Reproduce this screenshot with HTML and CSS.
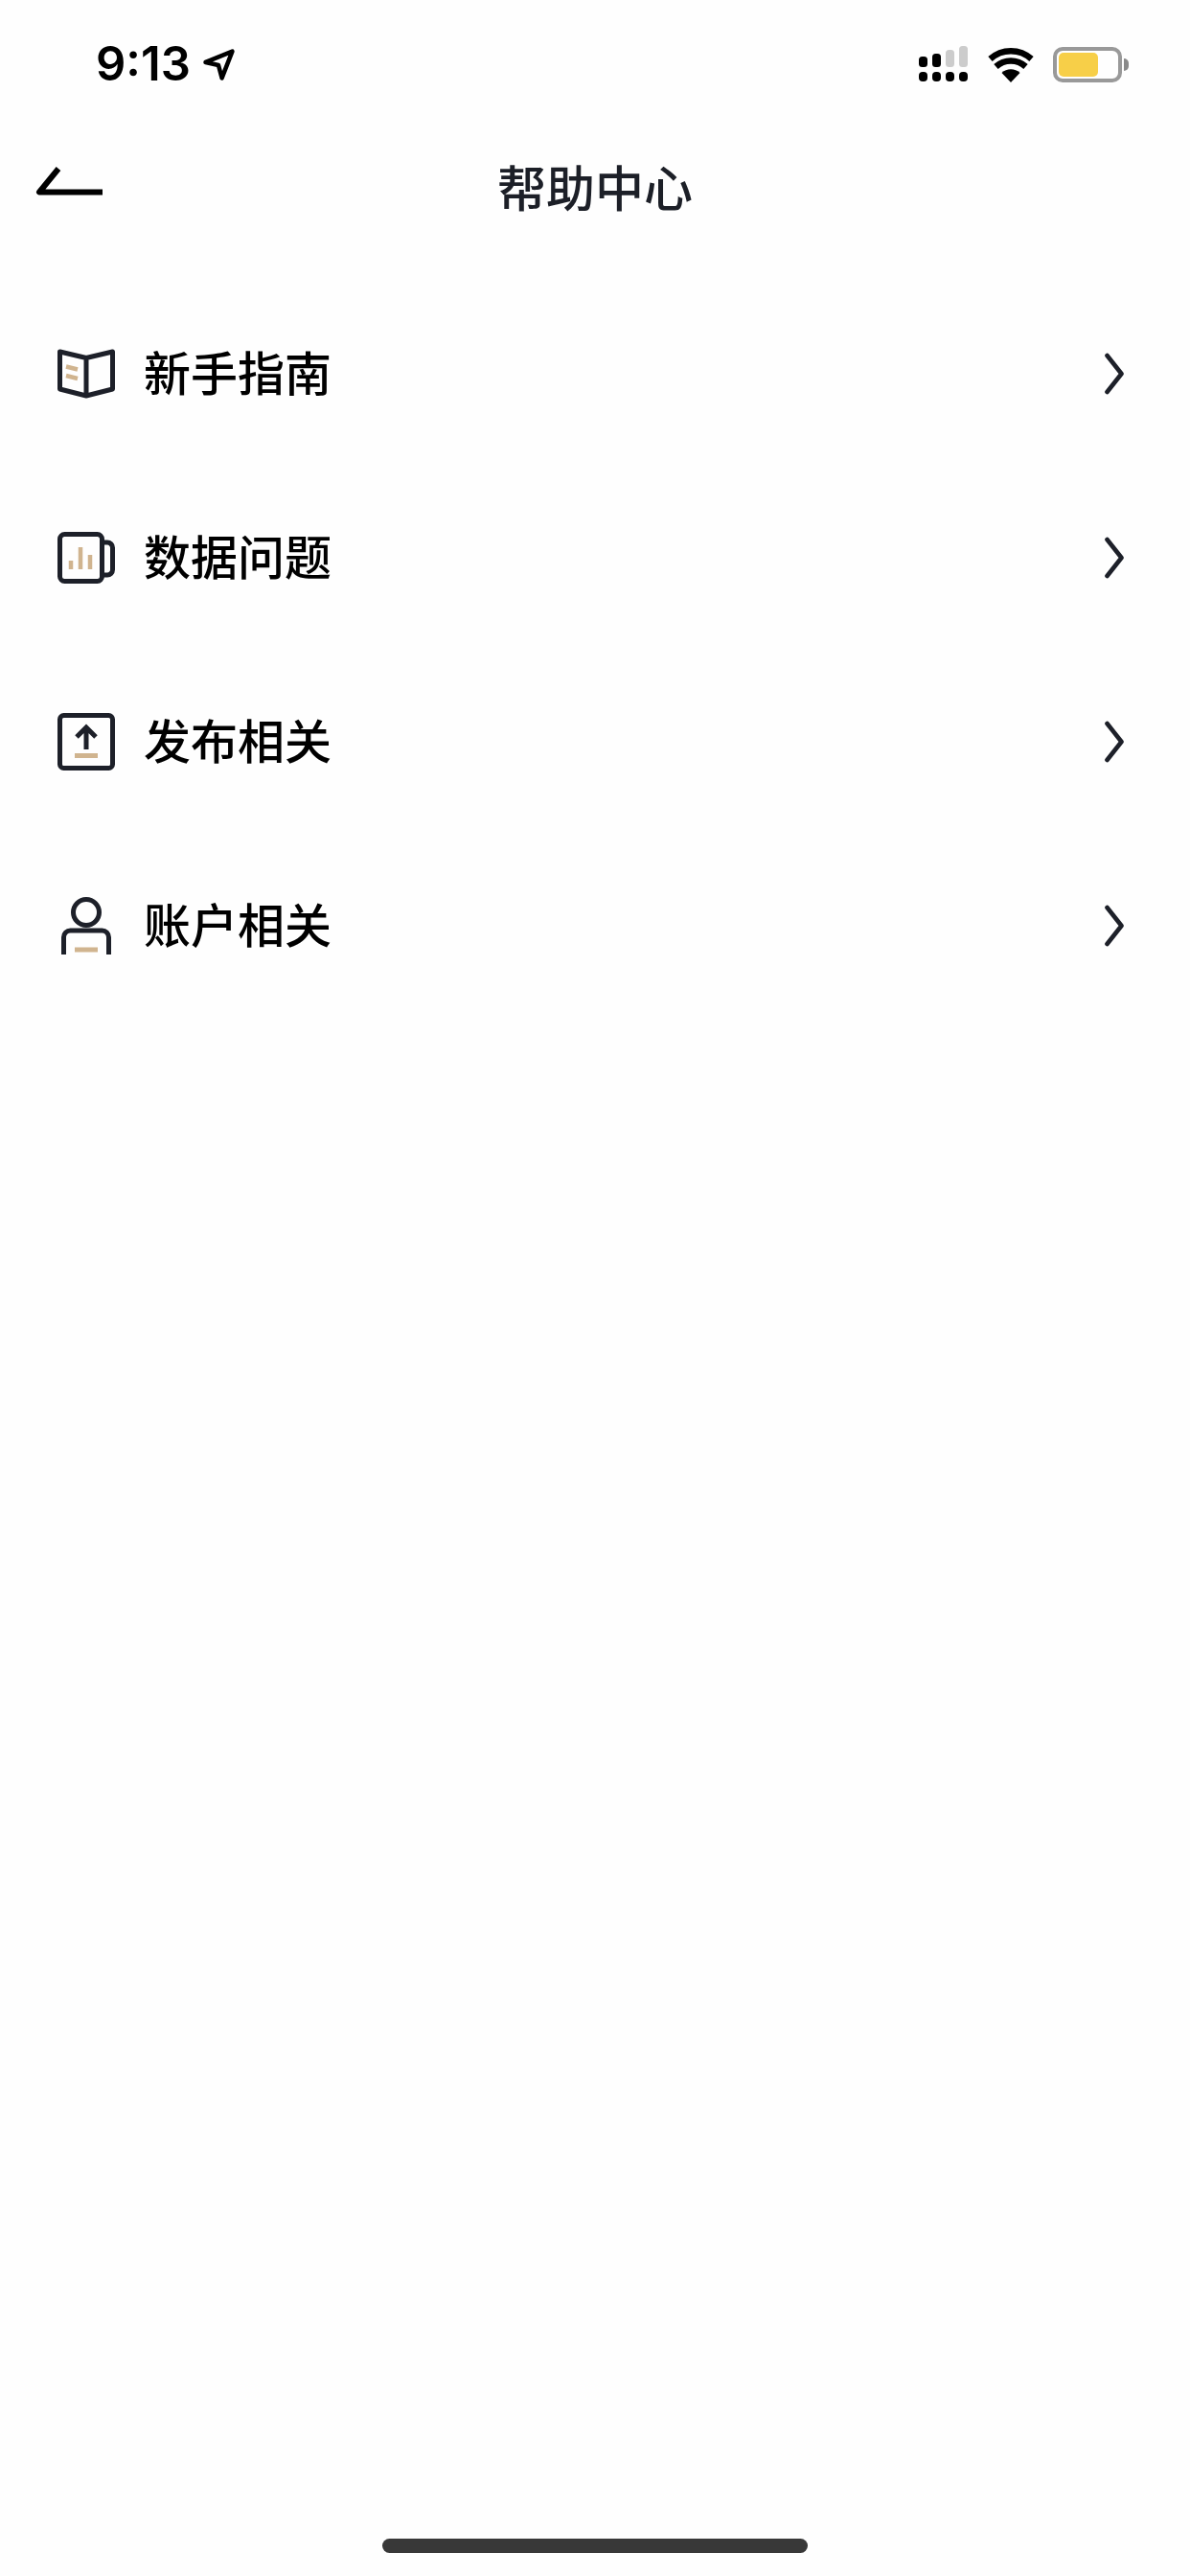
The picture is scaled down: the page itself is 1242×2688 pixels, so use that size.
FILE: index.html
```html
<!DOCTYPE html>
<html lang="zh">
<head>
    <meta charset="UTF-8">
    <meta name="viewport" content="width=device-width, initial-scale=1.0">
    <title>帮助中心</title>
    <link rel="stylesheet" href="styles.css">
</head>
<body>

<div class="status-bar">
    <div class="status-left">
        <span class="time">9:13</span>
        <svg class="location" width="33" height="33" viewBox="0 0 32 32">
            <path d="M2.5 13.5 L29.5 2.5 L19 29.5 L15.5 16.5 Z" fill="none" stroke="#000" stroke-width="4.4" stroke-linejoin="round"/>
        </svg>
    </div>
    <div class="status-right">
        <svg class="signal" width="52" height="38" viewBox="0 0 52 38">
            <rect x="0" y="11" width="9" height="11" rx="3.5" fill="#000"/>
            <rect x="14" y="8" width="9" height="14" rx="3.5" fill="#000"/>
            <rect x="28" y="4" width="9" height="18" rx="3.5" fill="#ccc"/>
            <rect x="42" y="0" width="9" height="22" rx="3.5" fill="#ccc"/>
            <rect x="0" y="27" width="9" height="10" rx="4" fill="#000"/>
            <rect x="14" y="27" width="9" height="10" rx="4" fill="#000"/>
            <rect x="28" y="27" width="9" height="10" rx="4" fill="#000"/>
            <rect x="42" y="27" width="9" height="10" rx="4" fill="#000"/>
        </svg>
        <svg class="wifi" width="48" height="37" viewBox="0 0 48 37">
            <path d="M24 37 L14.5 27 A14 14 0 0 1 33.5 27 Z" fill="#000"/>
            <path d="M8.5 20.5 A23 23 0 0 1 39.5 20.5" fill="none" stroke="#000" stroke-width="6.5"/>
            <path d="M2.5 12.5 A32 32 0 0 1 45.5 12.5" fill="none" stroke="#000" stroke-width="6.5"/>
        </svg>
        <div class="battery">
            <div class="battery-body"><div class="battery-level"></div></div>
            <div class="battery-tip"></div>
        </div>
    </div>
</div>

<div class="nav-bar">
    <svg class="back" width="72" height="32" viewBox="0 0 72 32">
        <path d="M25 2 L5 26.5 H71" fill="none" stroke="#000" stroke-width="6" stroke-linejoin="round"/>
    </svg>
    <h1 class="nav-title">帮助中心</h1>
</div>

<div class="help-list">
    <div class="help-row">
        <svg class="row-icon" width="60" height="52" viewBox="0 0 60 52">
            <path d="M2.5 3 L30 9.5 L57.5 3 V42 L30 49 L2.5 42 Z M30 9.5 V49" fill="none" stroke="#1d2029" stroke-width="5" stroke-linejoin="round"/>
            <path d="M9 18.5 L21 21.5 M9 28 L21 31" stroke="#d0b48f" stroke-width="4.5"/>
        </svg>
        <span class="row-label">新手指南</span>
        <svg class="chevron" width="20" height="44" viewBox="0 0 20 44">
            <path d="M2.5 3 L17.5 22 L2.5 41" fill="none" stroke="#1d2029" stroke-width="4.6" stroke-linecap="round" stroke-linejoin="round"/>
        </svg>
    </div>
    <div class="help-row">
        <svg class="row-icon" width="60" height="54" viewBox="0 0 60 54">
            <rect x="2.5" y="2.5" width="44" height="49" rx="5" fill="none" stroke="#1d2029" stroke-width="5"/>
            <path d="M47 11 H52 A5.5 5.5 0 0 1 57.5 16.5 V39.5 A5.5 5.5 0 0 1 52 45 H47" fill="none" stroke="#1d2029" stroke-width="5"/>
            <path d="M14 39 V30 M24 39 V16 M34 39 V24" stroke="#d0b48f" stroke-width="4.5"/>
        </svg>
        <span class="row-label">数据问题</span>
        <svg class="chevron" width="20" height="44" viewBox="0 0 20 44">
            <path d="M2.5 3 L17.5 22 L2.5 41" fill="none" stroke="#1d2029" stroke-width="4.6" stroke-linecap="round" stroke-linejoin="round"/>
        </svg>
    </div>
    <div class="help-row">
        <svg class="row-icon" width="60" height="60" viewBox="0 0 60 60">
            <rect x="2.5" y="2.5" width="55" height="55" rx="4" fill="none" stroke="#1d2029" stroke-width="5"/>
            <path d="M30 38 V15 M20 25 L30 15 L40 25" fill="none" stroke="#1d2029" stroke-width="5"/>
            <path d="M18 44.5 H42" stroke="#d0b48f" stroke-width="5"/>
        </svg>
        <span class="row-label">发布相关</span>
        <svg class="chevron" width="20" height="44" viewBox="0 0 20 44">
            <path d="M2.5 3 L17.5 22 L2.5 41" fill="none" stroke="#1d2029" stroke-width="4.6" stroke-linecap="round" stroke-linejoin="round"/>
        </svg>
    </div>
    <div class="help-row">
        <svg class="row-icon" width="60" height="60" viewBox="0 0 60 60">
            <circle cx="30" cy="16" r="13.5" fill="none" stroke="#1d2029" stroke-width="5"/>
            <path d="M6.5 60 V42 A7 7 0 0 1 13.5 35 H46.5 A7 7 0 0 1 53.5 42 V60" fill="none" stroke="#1d2029" stroke-width="5"/>
            <path d="M18 55 H42" stroke="#d0b48f" stroke-width="5"/>
        </svg>
        <span class="row-label">账户相关</span>
        <svg class="chevron" width="20" height="44" viewBox="0 0 20 44">
            <path d="M2.5 3 L17.5 22 L2.5 41" fill="none" stroke="#1d2029" stroke-width="4.6" stroke-linecap="round" stroke-linejoin="round"/>
        </svg>
    </div>
</div>

<div class="home-bar"></div>

</body>
</html>
```

FILE: styles.css
```css
body {
    background-color: #fefefe;
    margin: 0;
    height: 2688px;
    display: flex;
    flex-direction: column;
    overflow: hidden;
    font-family: "Noto Sans CJK SC", "Noto Sans", sans-serif;
}
.status-bar {
    height: 134px;
    display: flex;
    justify-content: space-between;
    align-items: center;
    padding: 0 64px 0 100px;
}
.status-left {
    display: flex;
    align-items: center;
    gap: 13px;
}
.time {
    font-family: Inter, sans-serif;
    font-size: 49px;
    font-weight: 600;
    line-height: 48px;
    color: #000;
}
.status-right {
    display: flex;
    align-items: center;
}
.signal {
    margin-right: 20px;
}
.wifi {
    margin-right: 20px;
}
.battery {
    display: flex;
    align-items: center;
}
.battery-body {
    box-sizing: border-box;
    width: 72px;
    height: 37px;
    border: 4px solid #999;
    border-radius: 10px;
    padding: 2px;
}
.battery-level {
    width: 41px;
    height: 25px;
    background-color: #f7cf48;
    border-radius: 5px;
}
.battery-tip {
    width: 5px;
    height: 13px;
    margin-left: 2px;
    background-color: #8a8a8a;
    border-radius: 0 6px 6px 0;
}
.nav-bar {
    height: 126px;
    display: flex;
    align-items: center;
    justify-content: center;
    position: relative;
}
.back {
    position: absolute;
    left: 36px;
    top: 40px;
}
.nav-title {
    margin: 0 0 6px;
    font-size: 51px;
    font-weight: 500;
    line-height: 70px;
    color: #1c1f27;
}
.help-list {
    padding-top: 34px;
}
.help-row {
    height: 192px;
    display: flex;
    align-items: center;
    padding: 0 69px 0 60px;
}
.row-icon {
    flex-shrink: 0;
}
.row-label {
    margin: 0 0 6px 30px;
    font-size: 49px;
    font-weight: 500;
    line-height: 68px;
    color: #000;
}
.chevron {
    margin-left: auto;
}
.home-bar {
    width: 444px;
    height: 15px;
    margin: auto auto 24px;
    background-color: #383838;
    border-radius: 8px;
}
```
